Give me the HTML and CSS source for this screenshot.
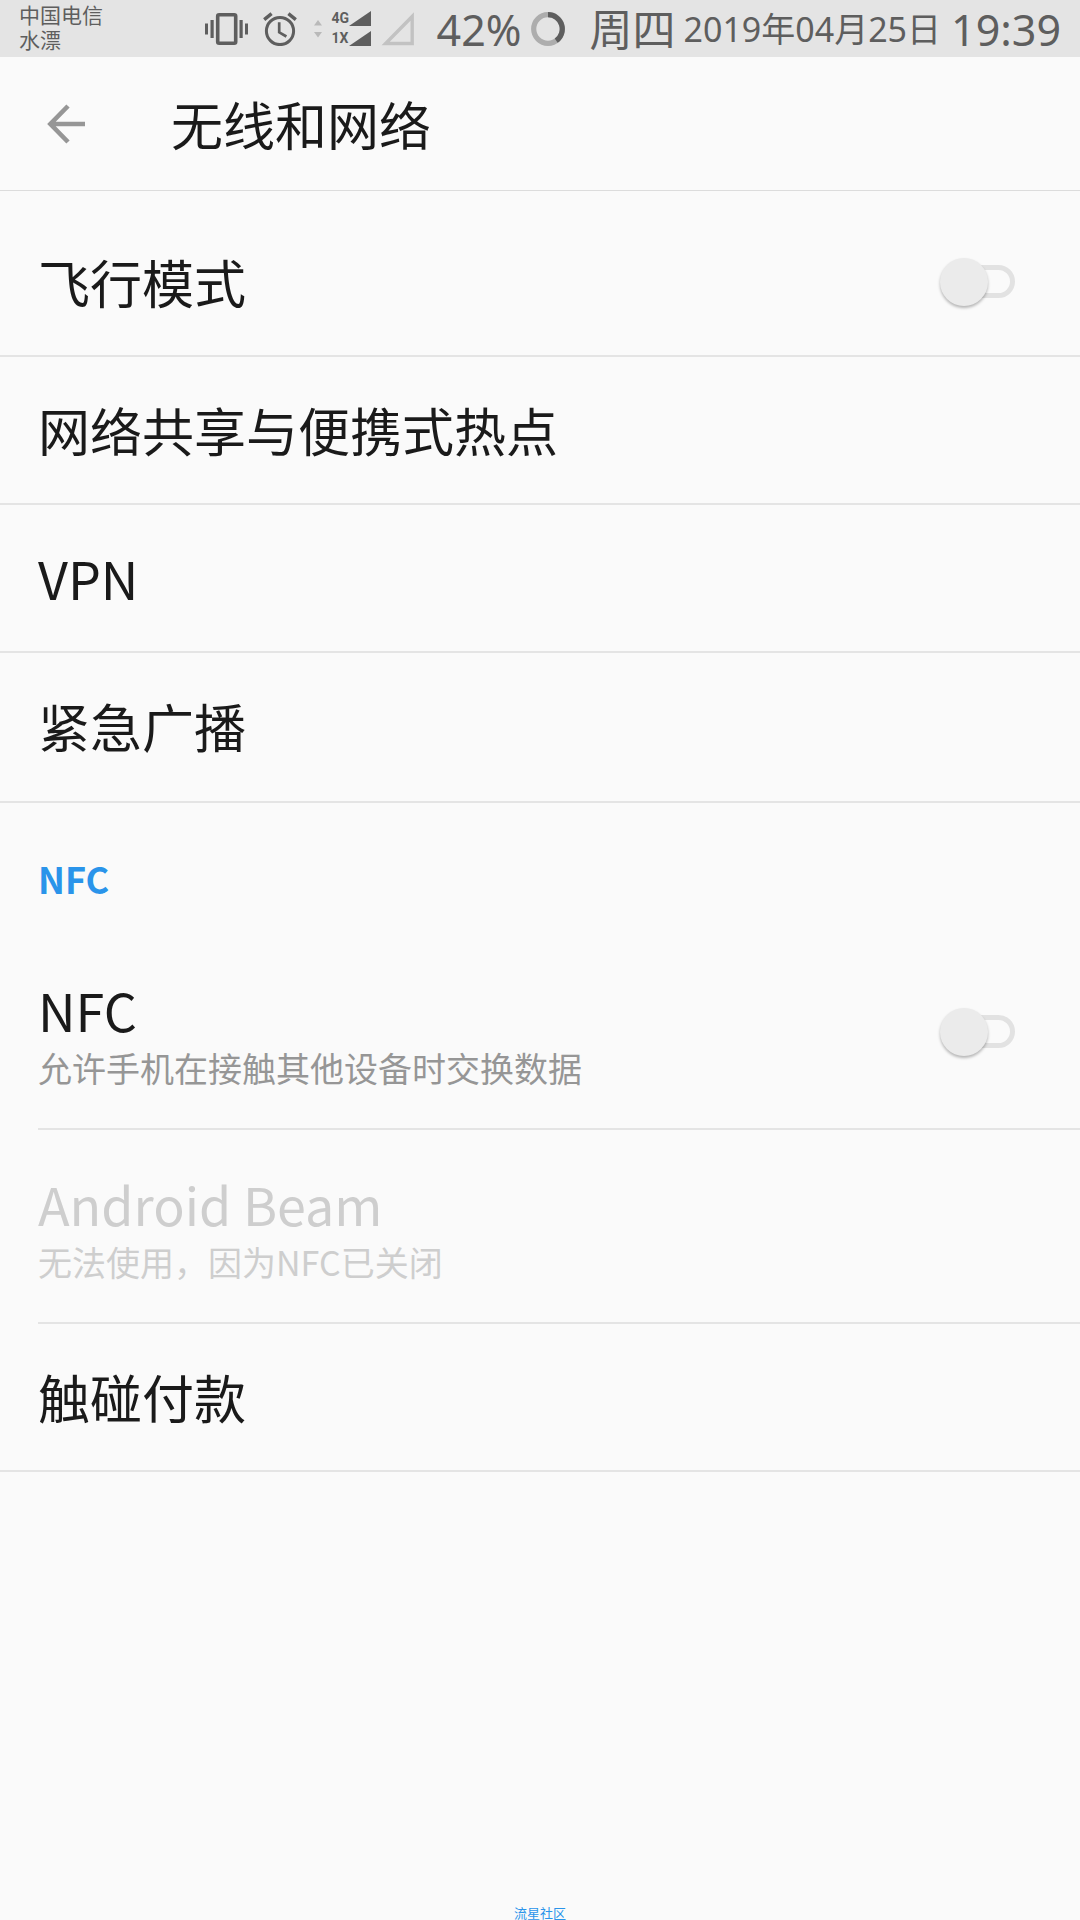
FILE: index.html
```html
<!DOCTYPE html>
<html lang="zh-CN">
<head>
<meta charset="utf-8">
<meta name="viewport" content="width=device-width, initial-scale=1">
<title>无线和网络</title>
<link rel="stylesheet" href="styles.css">
</head>
<body>
<div class="screen">
  <div class="status">
    <div class="carrier"><span>中国电信</span><span>水漂</span></div>
    <div class="status-icons">
      <svg class="icon-vibrate" width="44" height="34" viewBox="0 0 44 34" aria-hidden="true">
        <rect x="12.7" y="2.7" width="18" height="28.6" rx="1.5" fill="none" stroke="#5e5e5e" stroke-width="3.6"/>
        <path d="M0 11.5h3v11H0zM5.5 8h3.2v18H5.5zM34.5 8h3.2v18h-3.2zM40 11.5h3v11h-3z" fill="#5e5e5e"/>
      </svg>
      <svg class="icon-alarm" width="34" height="34" viewBox="0 0 34 34" aria-hidden="true">
        <g fill="none" stroke="#5e5e5e">
          <circle cx="17" cy="19" r="13.6" stroke-width="3"/>
          <path d="M16.2 10.3v10l7.2 4.2" stroke-width="2.7"/>
          <path d="M1.2 7.6L8.6 1.6M25.4 1.6l7.4 6" stroke-width="3.4"/>
        </g>
      </svg>
      <svg class="icon-data" width="8" height="18" viewBox="0 0 8 18" aria-hidden="true">
        <path d="M4 0l4 5.5H0zM4 17.5L0 12h8z" fill="#b9b9b9"/>
      </svg>
      <div class="signal">
        <span>4G</span>
        <svg width="22" height="15" viewBox="0 0 22 15" aria-hidden="true"><path d="M22 0v15H0z" fill="#5e5e5e"/></svg>
        <span>1X</span>
        <svg width="22" height="15" viewBox="0 0 22 15" aria-hidden="true"><path d="M22 0v15H0z" fill="#5e5e5e"/></svg>
      </div>
      <svg class="icon-nosignal" width="34" height="34" viewBox="0 0 34 34" aria-hidden="true">
        <path d="M31.2 4.5v27H4.6z" fill="none" stroke="#c2c2c2" stroke-width="3.4"/>
      </svg>
    </div>
    <span class="big battery">42%</span>
    <svg class="icon-battery" width="34" height="34" viewBox="0 0 34 34" aria-hidden="true">
      <circle cx="17" cy="17" r="14.3" fill="none" stroke="#adadad" stroke-width="5.2"/>
      <path d="M17 2.7A14.3 14.3 0 0 1 25.2 28.7" fill="none" stroke="#5e5e5e" stroke-width="5.2"/>
    </svg>
    <span class="big weekday">周四</span>
    <span class="date">2019年04月25日</span>
    <span class="big time">19:39</span>
  </div>

  <header class="header">
    <button class="back" type="button" aria-label="返回">
      <svg width="40" height="40" viewBox="0 0 40 40" aria-hidden="true">
        <path d="M21 2L3.4 20 21 38M3.4 20H38" fill="none" stroke="#969696" stroke-width="4.6"/>
      </svg>
    </button>
    <h1 class="title">无线和网络</h1>
  </header>

  <main class="list">
    <div class="row">
      <label class="name" for="airplane">飞行模式</label>
      <input class="switch" id="airplane" type="checkbox" role="switch">
    </div>
    <a class="row" href="#tethering"><span class="name">网络共享与便携式热点</span></a>
    <a class="row" href="#vpn"><span class="name">VPN</span></a>
    <a class="row row-last" href="#broadcast"><span class="name">紧急广播</span></a>

    <h2 class="category">NFC</h2>
    <div class="row row-detail">
      <label class="text" for="nfc">
        <span class="name">NFC</span>
        <span class="summary">允许手机在接触其他设备时交换数据</span>
      </label>
      <input class="switch" id="nfc" type="checkbox" role="switch">
    </div>
    <div class="row row-detail disabled" aria-disabled="true">
      <div class="text">
        <span class="name">Android Beam</span>
        <span class="summary">无法使用，因为NFC已关闭</span>
      </div>
    </div>
    <a class="row" href="#pay"><span class="name">触碰付款</span></a>
  </main>

  <footer class="footer">流星社区</footer>
</div>
</body>
</html>
```
FILE: styles.css
```css
* {
  box-sizing: border-box;
}

body {
  margin: 0;
  background: #fafafa;
  color: #1a1a1a;
  font-family: "Noto Sans CJK SC", "Noto Sans", sans-serif;
}

.screen {
  display: flex;
  flex-direction: column;
  min-height: 100vh;
}

/* Status bar */
.status {
  display: flex;
  align-items: center;
  height: 57px;
  padding: 0 19px;
  background: #e4e4e4;
  color: #5e5e5e;
  font-family: "Noto Sans", "Noto Sans CJK SC", sans-serif;
  white-space: nowrap;
}

.carrier {
  display: flex;
  flex-direction: column;
  padding-bottom: 2px;
  font-size: 21px;
  line-height: 25px;
}

.status-icons {
  display: flex;
  align-items: center;
  margin-left: auto;
}

.icon-alarm {
  margin-left: 14px;
}

.icon-data {
  margin-left: 17px;
}

.signal {
  display: grid;
  grid-template-columns: 16px 22px;
  gap: 5px 1px;
  margin-left: 10px;
  font: bold 14px/15px "Liberation Sans Narrow", Roboto, sans-serif;
}

.icon-nosignal {
  margin-left: 10px;
}

.big {
  padding-top: 2px;
  font-size: 43px;
  line-height: 56px;
}

.battery {
  margin-left: 22px;
}

.icon-battery {
  margin-left: 10px;
}

.weekday {
  margin-left: 24px;
}

.date {
  margin-left: 8px;
  font-size: 34px;
  line-height: 56px;
}

.time {
  margin-left: 10px;
}

/* App bar */
.header {
  display: flex;
  align-items: center;
  gap: 84px;
  height: 134px;
  padding: 0 47px;
  border-bottom: 1px solid #dcdcdc;
}

.back {
  display: flex;
  padding: 0;
  border: 0;
  background: none;
}

.title {
  margin: 0;
  font-size: 52px;
  font-weight: 400;
  line-height: 60px;
}

/* Preference list */
.list {
  padding-top: 18px;
}

.row {
  display: flex;
  align-items: center;
  justify-content: space-between;
  padding: 43px 65px 43px 38px;
  border-bottom: 2px solid #e4e4e4;
  color: inherit;
  text-decoration: none;
}

.row-last {
  padding-bottom: 45px;
}

.row-detail {
  margin-left: 38px;
  padding: 38px 65px 38px 0;
}

.name {
  font-size: 52px;
  line-height: 60px;
}

.text {
  display: flex;
  flex-direction: column;
  gap: 6px;
  padding-top: 6px;
}

.summary {
  color: #969696;
  font-size: 34px;
  line-height: 44px;
}

.disabled,
.disabled .summary {
  color: #cecece;
}

.category {
  margin: 0;
  padding: 53px 38px 36px;
  color: #2a94ea;
  font-size: 36px;
  font-weight: 700;
  line-height: 44px;
}

.switch {
  appearance: none;
  position: relative;
  width: 75px;
  height: 48px;
  margin: 0;
}

.switch::before {
  content: "";
  position: absolute;
  inset: 7px 0 8px 11px;
  border: 5px solid #e2e2e2;
  border-radius: 17px;
}

.switch::after {
  content: "";
  position: absolute;
  left: 0;
  top: 0;
  width: 48px;
  height: 48px;
  border-radius: 50%;
  background: #ebebeb;
  box-shadow: 0 2px 3px rgba(0, 0, 0, 0.28);
}

.switch:checked::before {
  border-color: #2a94ea;
}

.switch:checked::after {
  left: 27px;
  background: #2a94ea;
}

.footer {
  margin-top: auto;
  color: #2a94ea;
  font-size: 13px;
  line-height: 14px;
  text-align: center;
}
```
